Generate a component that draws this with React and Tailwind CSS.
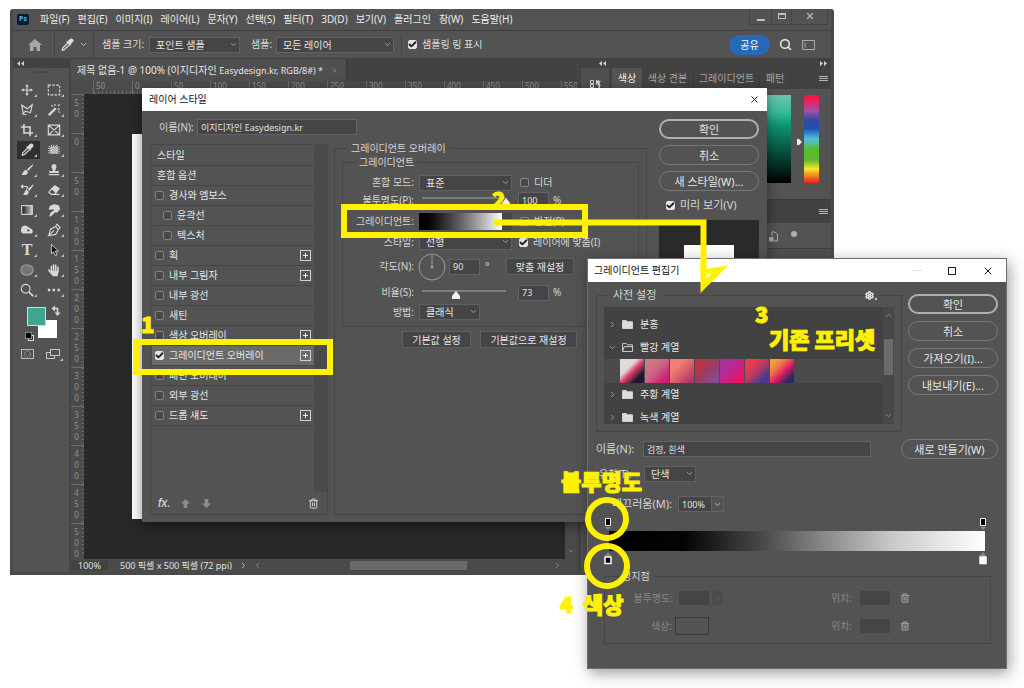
// App.jsx
import { useState } from "react";
import {
    Check,
    ChevronDown,
    ChevronLeft,
    ChevronRight,
    ChevronUp,
    Search,
    Settings,
    Trash2,
    X,
} from "lucide-react";

const MENUS = [
    "파일(F)",
    "편집(E)",
    "이미지(I)",
    "레이어(L)",
    "문자(Y)",
    "선택(S)",
    "필터(T)",
    "3D(D)",
    "보기(V)",
    "플러그인",
    "창(W)",
    "도움말(H)",
];

const EFFECTS = [
    { name: "경사와 엠보스" },
    { name: "윤곽선", sub: true },
    { name: "텍스처", sub: true },
    { name: "획", plus: true },
    { name: "내부 그림자", plus: true },
    { name: "내부 광선" },
    { name: "새틴" },
    { name: "색상 오버레이", plus: true },
    { name: "그레이디언트 오버레이", plus: true },
    { name: "패턴 오버레이" },
    { name: "외부 광선" },
    { name: "드롭 섀도", plus: true },
];

const SWATCHES = [
    "bg-[linear-gradient(135deg,#dcdcd8_15%,#dcdcd8_35%,#e0406c_52%,#1b1830_78%)]",
    "bg-[linear-gradient(135deg,#c98080_10%,#cf5f85_50%,#cc1c78_85%)]",
    "bg-[linear-gradient(135deg,#f07f72_30%,#d8606c_55%,#b03468_90%)]",
    "bg-[linear-gradient(135deg,#c03440_20%,#9a3c60_50%,#8a4a94_85%)]",
    "bg-[linear-gradient(135deg,#a8309c_20%,#c0248c_50%,#ec1468_85%)]",
    "bg-[linear-gradient(135deg,#e83c4c_25%,#b03c64_50%,#4c3890_80%)]",
    "bg-[linear-gradient(135deg,#f0a03c_15%,#ec7048_35%,#e41c64_55%,#30285c_82%)]",
];

// Small drawings of the toolbar, each on a 16x16 grid
const TOOLS = [
    {
        name: "이동",
        art: (
            <g>
                <path d="M8 2v12M2 8h12" />
                <path d="M6 4l2-2.5L10 4zM6 12l2 2.5 2-2.5zM4 6L1.500 8 4 10zM12 6l2.500 2L12 10z" fill="currentColor" stroke="none" />
            </g>
        ),
    },
    { name: "사각형 선택", art: <path d="M1.500 2.500h13v11h-13z" strokeDasharray="3 1.500" /> },
    { name: "다각형 올가미", art: <path d="M3.500 11L2 2.500l6.500 4L14 2l-2 9-6-1.500-3 3 4.500 1" /> },
    {
        name: "자동 선택",
        art: (
            <g>
                <path d="M2 14l8-8" strokeWidth="2.800" />
                <path d="M9 1v2.500M14.500 7H12M14.500 1.500L12.500 3.500M5 2.500L6.500 4M14.500 11L13 9.500" />
            </g>
        ),
    },
    { name: "자르기", art: <path d="M4.500 1v10.500H15M1 4.500h10.500V15" strokeWidth="1.800" /> },
    { name: "프레임", art: <path d="M1.500 2.500h13v11h-13zM1.500 2.500l13 11M14.500 2.500l-13 11" /> },
    {
        name: "스포이드",
        active: true,
        art: (
            <g>
                <path d="M8.500 6L3 11.500 2.500 14l2.300-.7L10.500 8" />
                <path d="M8 4.500l1.500-.5L12 1.500c1.500-1 3.500 1 2.500 2.500L12 6.500 11.500 8z" fill="currentColor" />
            </g>
        ),
    },
    {
        name: "복구 브러시",
        art: (
            <g>
                <rect x="3" y="4" width="10" height="8" rx="2" fill="#b4b4b4" stroke="none" />
                <path d="M2 4h12v8H2z" strokeDasharray="1 1.500" />
                <path d="M5 2v12M8 2v12M11 2v12" strokeDasharray="1 2" />
            </g>
        ),
    },
    {
        name: "브러시",
        art: (
            <path d="M14.500 1.500L8 7l1.500 2L15 2.500zM7 8c-3.500 0-2.500 3-5.500 5.500 3.500.8 8 .2 7.500-3.500z" fill="currentColor" stroke="none" />
        ),
    },
    {
        name: "도장",
        art: (
            <path d="M8 1a3.300 3.300 0 0 0-2 5.500L6.800 9H2.500v2.500h11V9H9.200L10 6.500A3.300 3.300 0 0 0 8 1zM2 12.500h12V14H2z" fill="currentColor" stroke="none" />
        ),
    },
    {
        name: "작업 내역 브러시",
        art: (
            <g>
                <path d="M15 1.500L9 7l1.500 2 5-6.500zM8 8c-3 0-2 3-4.500 5.500 3 .8 7 .2 6.500-3.500z" fill="currentColor" stroke="none" />
                <path d="M1 4h7c1 0 1 2-1 3M3.500 2l-2 2 2 2" />
            </g>
        ),
    },
    {
        name: "지우개",
        art: (
            <g>
                <path d="M9 3l5 3.500-3.500 4-5-4z" fill="currentColor" />
                <path d="M5.500 6.500l5 4L8.500 13H5l-3-2.500zM8 13h6" />
            </g>
        ),
    },
    {
        name: "그레이디언트",
        art: (
            <g>
                <defs>
                    <linearGradient id="toolGradient">
                        <stop offset="0" stopColor="#111" />
                        <stop offset="1" stopColor="#ccc" />
                    </linearGradient>
                </defs>
                <rect x="2" y="3" width="12" height="10" fill="url(#toolGradient)" />
            </g>
        ),
    },
    {
        name: "손가락",
        art: (
            <path d="M2 7l1.500-4L8 1.500l5.500 1L15 7l-3.500 4-2-.5L4.500 15l-2 .3L4 11l4.500-3-2-1L4 8z" fill="currentColor" stroke="none" />
        ),
    },
    {
        name: "닷지",
        art: (
            <g>
                <path d="M1.500 6c1-3 5-4 7-2l5 3c2 1 1 5-1 5h-8C1.500 12 .5 9 1.500 6z" fill="currentColor" stroke="none" />
                <circle cx="9.500" cy="8.500" r="1.300" fill="#535353" stroke="none" />
            </g>
        ),
    },
    {
        name: "펜",
        art: <path d="M2 14.500l2-7.500 6-3 3 3.500-3 5.500-8 1.500L8 8.500M10 3l1.500-1.500L15 5l-1.500 2" />,
    },
    { name: "문자", text: "T" },
    {
        name: "패스 선택",
        art: (
            <path d="M5 1.500v11l2.500-2.500 2 4.500 2-1-2-4.300h3.500z" fill="#111" strokeWidth="1" />
        ),
    },
    { name: "타원", art: <ellipse cx="8" cy="8" rx="7" ry="6" fill="#757575" stroke="#a0a0a0" /> },
    {
        name: "손",
        art: (
            <g>
                <path d="M5 10V4M7.500 9V2M10 9V2.500M12.500 10V5M2 8l3.500 4.500" strokeWidth="1.800" strokeLinecap="round" />
                <path d="M4.200 9h9.200L12 15H6.500z" fill="currentColor" stroke="none" />
            </g>
        ),
    },
    {
        name: "돋보기",
        art: (
            <g>
                <circle cx="6.500" cy="6.500" r="5" />
                <path d="M10 10l5 5" strokeWidth="2" />
            </g>
        ),
    },
    {
        name: "도구 모음 편집",
        art: <path d="M1 8h2.700M6.500 8h2.700M12 8h2.700" strokeWidth="2.700" />,
    },
];

const CheckBox = ({ children, checked = false, dim = false }) => {
    const [on, setOn] = useState(checked);
    return (
        <label className="flex items-center gap-[5px] whitespace-nowrap">
            <span className="relative flex size-[9px] shrink-0">
                <input
                    type="checkbox"
                    checked={on}
                    onChange={() => setOn(!on)}
                    className={`size-full appearance-none rounded-[2px] border ${
                        dim ? "border-[#808080]" : "border-[#8a8a8a]"
                    } bg-[#484848] checked:border-[#e4e4e4] checked:bg-[#e4e4e4]`}
                />
                {on && (
                    <Check
                        className="pointer-events-none absolute inset-0 size-full text-[#222]"
                        strokeWidth={5}
                    />
                )}
            </span>
            {children}
        </label>
    );
};

const Select = ({ value, label, className }) => (
    <span className={`relative flex h-4 ${className}`}>
        <select
            aria-label={label}
            className="w-full appearance-none border border-[#616161] bg-[#454545] pl-[6px] leading-[14px] text-[#e6e6e6]"
        >
            <option>{value}</option>
        </select>
        <ChevronDown className="pointer-events-none absolute top-[3px] right-[2px] size-[9px] text-[#b8b8b8]" />
    </span>
);

const Field = ({ id, value, className }) => (
    <input
        id={id}
        defaultValue={value}
        className={`h-4 min-w-0 border border-[#626262] bg-[#454547] px-[3px] text-[9px] text-[#e0e0e0] ${className}`}
    />
);

const PillButton = ({ children, primary }) => (
    <button
        className={`h-5 w-full rounded-full text-[11px] leading-none whitespace-nowrap text-[#e6e6e6] ${
            primary ? "border-2 border-[#b0b0b0]" : "border border-[#787878]"
        }`}
    >
        {children}
    </button>
);

const SmallButton = ({ children, className }) => (
    <button
        className={`h-[17px] border border-[#5f5f5f] bg-[#454545] leading-none whitespace-nowrap text-[#e6e6e6] ${className}`}
    >
        {children}
    </button>
);

const Slider = ({ id, at }) => (
    <span className="relative flex h-3 w-[84px] items-start pt-[3px]">
        <input
            id={id}
            type="range"
            defaultValue={at}
            className="h-[2px] w-full appearance-none bg-[#7c7c7c] [&::-webkit-slider-thumb]:opacity-0"
        />
        <svg
            viewBox="0 0 8 8"
            className="pointer-events-none absolute top-[4px] -ml-1 size-2"
            style={{ left: `${at}%` }}
        >
            <path d="M4 0l4 5v3H0V5z" fill="#f2f2f2" />
        </svg>
    </span>
);

const Tool = ({ tool }) => (
    <button
        aria-label={tool.name}
        className={`flex h-[18px] w-[23px] items-center justify-center text-[#d8d8d8] ${
            tool.active ? "bg-[#2f2f2f]" : ""
        }`}
    >
        {tool.text ? (
            <span className="w-[14px] text-center font-['Liberation_Serif',serif] text-[16px] leading-none font-bold">
                {tool.text}
            </span>
        ) : (
            <svg viewBox="0 0 16 16" className="size-[14px]" fill="none" stroke="currentColor" strokeWidth="1.300">
                {tool.art}
            </svg>
        )}
        <svg viewBox="0 0 3 3" className="mt-[11px] size-[3px]">
            <path d="M3 0v3H0z" fill="#bdbdbd" />
        </svg>
    </button>
);

const MenuLines = () => (
    <svg viewBox="0 0 9 7" className="h-[7px] w-[9px]" stroke="#b4b4b4">
        <path d="M0 1.500h9M0 3.500h9M0 5.500h9" />
    </svg>
);

const CollapseArrows = ({ right }) => (
    <svg viewBox="0 0 7 5" className="h-[5px] w-[7px]" fill="#d0d0d0">
        {right ? <path d="M0 0l3 2.500L0 5zM4 0l3 2.500L4 5z" /> : <path d="M3 0L0 2.500 3 5zM7 0L4 2.500 7 5z" />}
    </svg>
);

const Toolbar = () => (
    <aside className="flex w-[56px] shrink-0 flex-col">
        <div className="flex h-[9px] items-center bg-[#424242] pl-1">
            <CollapseArrows />
        </div>
        <div className="mx-auto mt-[3px] h-[2px] w-4 bg-[#494949]" />
        <div className="mt-2 grid grid-cols-2 gap-x-[3px] gap-y-[2px] pr-[2px] pl-1">
            {TOOLS.map((tool) => (
                <Tool key={tool.name} tool={tool} />
            ))}
        </div>
        <svg viewBox="0 0 56 64" className="mt-[3px] h-16 w-[56px] shrink-0" fill="none">
            <rect x="25" y="18" width="19" height="18" fill="#fff" />
            <rect x="14.500" y="5.500" width="18" height="18" fill="#3fa590" stroke="#d8d8d8" />
            <path d="M41 6.500h3.500v5" stroke="#d8d8d8" strokeWidth="1.600" />
            <path d="M42 3.500v6l-3.500-3zM41.500 10.500h6l-3 3.500z" fill="#d8d8d8" />
            <rect x="15.500" y="33.500" width="5" height="5" fill="#333" stroke="#ddd" />
            <rect x="12.500" y="30.500" width="6" height="6" fill="#000" stroke="#888" />
            <rect x="8.500" y="47.500" width="12" height="9" stroke="#bbb" />
            <circle cx="14.500" cy="52" r="3" stroke="#bbb" strokeDasharray="1 1" />
            <rect x="33.500" y="50.500" width="8" height="6" stroke="#c8c8c8" />
            <rect x="37.500" y="47.500" width="9" height="6" fill="#535353" stroke="#c8c8c8" />
            <path d="M50 56v3h-3z" fill="#bdbdbd" />
        </svg>
    </aside>
);

const DocumentArea = () => (
    <main className="flex min-w-0 flex-1 flex-col border-x-2 border-[#454545]">
        <div className="flex h-[22px] shrink-0 bg-[#424242]">
            <div className="flex items-center gap-[8px] border-r border-[#383838] bg-[#4f4f4f] pr-2 pl-[6px] text-[#e4e4e4]">
                <span className="whitespace-nowrap">
                    제목 없음-1 @ 100% (이지디자인 <span className="text-[9px]">Easydesign.kr, RGB/8#) *</span>
                </span>
                <X className="size-[7px] text-[#a0a0a0]" />
            </div>
        </div>
        <div className="flex h-[13px] shrink-0 overflow-hidden bg-[#4b4b4b] pl-[22px] text-[8px] leading-[10px] text-[#909090]">
            {[50, 0, 50, 100, 150, 200, 250, 300, 350, 400, 450, 500, 550].map((n, i) => (
                <span
                    key={i}
                    className="w-[39px] shrink-0 border-l border-[#6c6c6c] bg-[repeating-linear-gradient(90deg,#6c6c6c_0_1px,transparent_1px_4px)] bg-[length:100%_3px] bg-bottom bg-no-repeat pl-[2px]"
                >
                    {n}
                </span>
            ))}
        </div>
        <div className="flex min-h-0 flex-1">
            <div className="w-[13px] shrink-0 overflow-hidden bg-[#4b4b4b] text-[8px] leading-[9px] text-[#909090]">
                {[50, 0, 50, 100, 150, 200, 250, 300, 350, 400, 450, 500].map((n, i) => (
                    <div
                        key={i}
                        className="h-[39px] border-t border-[#6c6c6c] bg-[repeating-linear-gradient(180deg,#6c6c6c_0_1px,transparent_1px_4px)] bg-[length:2px_100%] bg-right bg-no-repeat pt-[2px] pl-px last:h-[30px]"
                    >
                        <span className="block w-[9px] [text-orientation:upright] [writing-mode:vertical-rl]">{n}</span>
                    </div>
                ))}
            </div>
            <div className="min-w-0 flex-1 overflow-hidden bg-[#282828] pt-[40px] pl-[48px]">
                <div className="size-[385px] bg-white" />
            </div>
            <div className="flex w-3 shrink-0 flex-col items-center justify-end bg-[#4a4a4a] pb-1">
                <ChevronDown className="size-2 text-[#999]" />
            </div>
        </div>
        <div className="flex h-[13px] shrink-0 items-center bg-[#4a4a4a] text-[9px] leading-none whitespace-nowrap text-[#e0e0e0]">
            <span className="w-[37px] bg-[#424242] pl-[7px]">100%</span>
            <span className="ml-[12px] w-[119px]">500 픽셀 x 500 픽셀 (72 ppi)</span>
            <ChevronRight className="size-[9px]" />
            <ChevronLeft className="ml-[5px] size-[9px] text-[#999]" />
            <div className="flex h-full flex-1 items-center pr-[3px]">
                <div className="mr-[86px] ml-auto h-[9px] w-[117px] bg-[#696969]" />
                <ChevronRight className="size-[9px] text-[#999]" />
            </div>
            <span className="w-3" />
        </div>
    </main>
);

const PanelDock = () => (
    <aside className="flex w-[252px] shrink-0 gap-[3px] bg-[#424242] pl-[2px]">
        <div className="flex w-[28px] flex-col">
            <div className="flex h-[9px] items-center justify-end pr-[3px]">
                <CollapseArrows />
            </div>
            <div className="flex flex-1 justify-center bg-[#4f4f4f] pt-[11px]">
                <svg viewBox="0 0 13 12" className="h-3 w-[13px]" fill="none" stroke="#d0d0d0">
                    <path d="M1.500 1.500h3v3h-3zM1.500 5.500h3v3h-3zM1.500 8.500h3v3h-3z" />
                    <path d="M7 1l5 1-1.500 1.500c1.500 2 1 5-1 7.500 0-3 0-5-1-6L7 6z" fill="#d0d0d0" stroke="none" />
                </svg>
            </div>
        </div>
        <div className="flex min-w-0 flex-1 flex-col">
            <div className="flex h-[9px] items-center justify-end pr-1">
                <CollapseArrows right />
            </div>
            <div className="flex h-[21px] items-center text-[#a6a6a6]">
                <button className="h-full w-[30px] bg-[#535353] text-[#f0f0f0]">색상</button>
                <button className="h-full w-[51px]">색상 견본</button>
                <button className="h-full w-[66px] border-l border-[#3c3c3c]">그레이디언트</button>
                <button className="h-full w-[32px] border-x border-[#3c3c3c]">패턴</button>
                <span className="mr-[3px] ml-auto">
                    <MenuLines />
                </span>
            </div>
            <div className="flex h-[110px] justify-end bg-[#535353] pt-[6px] pr-3">
                <div className="h-[88px] w-[160px] bg-[linear-gradient(to_bottom,transparent_20%,#000),linear-gradient(to_bottom,#6cc4ac,#12b48c_35%)]" />
                <svg viewBox="0 0 5 6" className="mt-[44px] mr-[2px] ml-[6px] h-[6px] w-[5px]">
                    <path d="M0 0h2l3 3-3 3H0z" fill="#eee" />
                </svg>
                <div className="h-[88px] w-[15px] bg-[linear-gradient(to_bottom,#ee1c2a,#e8206c_8%,#a050a4_18%,#3848a4_28%,#1f50b0_38%,#4cc4e0_50%,#5cb82c_62%,#64b82c_74%,#f4ea28_84%,#f08024_92%,#ec2024)]" />
            </div>
            <div className="flex h-[24px] items-center justify-end border-t border-[#3a3a3a] pr-[3px]">
                <MenuLines />
            </div>
            <div className="flex h-[26px] justify-end gap-[13px] border-b border-[#404040] bg-[#535353] pt-[8px] pr-[34px]">
                <svg viewBox="0 0 9 11" className="h-[11px] w-[9px]" fill="none" stroke="#aaa">
                    <path d="M3 5V1h3l2.500 2.500V10H5" />
                    <path d="M0 6h4.500v4.500H0z" fill="#aaa" stroke="none" />
                </svg>
                <span className="size-[6px] rounded-full bg-[#b0b0b0]" />
            </div>
            <div className="flex-1 bg-[#505050]" />
        </div>
    </aside>
);

const PhotoshopWindow = () => (
    <div className="flex flex-1 flex-col overflow-hidden rounded-t-[3px] border-x-[3px] border-b-[3px] border-[#4a4a4a] bg-[#535353]">
        <header className="flex h-[22px] shrink-0 items-center border-b border-[#404040] pl-1 text-[#ececec]">
            <span className="flex h-[11px] w-3 items-center justify-center rounded-[2px] bg-[#001e36] text-[7px] font-bold text-[#5db4ff]">
                Ps
            </span>
            <nav className="ml-[11px] flex gap-2 whitespace-nowrap">
                {MENUS.map((menu) => (
                    <button key={menu}>{menu}</button>
                ))}
            </nav>
            <div className="mr-[3px] mb-[6px] ml-auto flex h-[16px] items-stretch border border-t-0 border-[#434343] text-[#b8b8b8]">
                <button aria-label="최소화" className="flex w-[21px] items-end justify-center pb-[3px]">
                    <span className="h-[2px] w-2 bg-[#c0c0c0]" />
                </button>
                <button
                    aria-label="최대화"
                    className="flex w-[21px] items-center justify-center border-x border-[#434343]"
                >
                    <span className="h-[6px] w-2 border border-t-2 border-[#c0c0c0]" />
                </button>
                <button aria-label="닫기" className="flex w-[35px] items-center justify-center">
                    <X className="size-[10px]" strokeWidth={3} />
                </button>
            </div>
        </header>
        <div className="flex h-[28px] shrink-0 items-center border-b border-[#404040] whitespace-nowrap text-[#dcdcdc]">
            <svg viewBox="0 0 14 12" className="ml-[15px] h-3 w-[14px]">
                <path d="M7 0l7 6h-2v6H8.500V8h-3v4H2V6H0z" fill="#a8a8a8" />
            </svg>
            <span className="ml-[12px] h-full border-l border-[#454545]" />
            <svg viewBox="0 0 16 16" className="ml-[5px] size-[14px]" fill="none" stroke="#e0e0e0" strokeWidth="1.300">
                {TOOLS[6].art}
            </svg>
            <ChevronDown className="ml-[5px] size-[9px]" />
            <span className="mr-[8px] ml-[5px] h-full border-l border-[#454545]" />
            <span className="w-[42px]">샘플 크기:</span>
            <Select label="샘플 크기" value="포인트 샘플" className="ml-[5px] w-[91px]" />
            <span className="mr-[4px] ml-[11px] w-[21px]">샘플:</span>
            <Select label="샘플" value="모든 레이어" className="w-[118px]" />
            <span className="mr-[6px] ml-[7px] h-5 border-l border-[#454545]" />
            <CheckBox checked>샘플링 링 표시</CheckBox>
            <button className="ml-auto h-5 w-[41px] rounded-full bg-[#2669b8] leading-none text-white">공유</button>
            <Search className="ml-[9px] size-[13px] text-[#e0e0e0]" strokeWidth={3} />
            <svg viewBox="0 0 13 10" className="mr-[16px] ml-[10px] h-[10px] w-[13px]" fill="none" stroke="#aaa">
                <path d="M.5.500h12v9H.500zM3 2.500v5" />
            </svg>
        </div>
        <div className="flex min-h-0 flex-1">
            <Toolbar />
            <DocumentArea />
            <PanelDock />
        </div>
    </div>
);

const Row = ({ label, htmlFor, className, children }) => (
    <div className={`flex items-center ${className}`}>
        <label htmlFor={htmlFor} className="mr-[5px] w-[71px] text-right whitespace-nowrap">
            {label}
        </label>
        {children}
    </div>
);

const LayerStyleDialog = () => (
    <section className="absolute top-[88px] left-[142px] flex min-h-[434px] w-[625px] flex-col bg-[#535353] text-[#d6d6d6] shadow-[0_4px_12px_rgba(0,0,0,0.45)]">
        <header className="flex h-[23px] items-center justify-between bg-white px-[7px] text-[#111]">
            레이어 스타일
            <button aria-label="닫기">
                <X className="size-[11px]" strokeWidth={2} />
            </button>
        </header>
        <div className="flex flex-1 gap-3 p-2 pb-[7px]">
            <div className="flex flex-1 flex-col">
                <div className="flex h-4 items-center">
                    <label htmlFor="layerName" className="mr-1 ml-[9px] w-[34px] whitespace-nowrap">
                        이름(N):
                    </label>
                    <Field id="layerName" value="이지디자인 Easydesign.kr" className="w-[160px]" />
                </div>
                <div className="mt-[6px] flex flex-1 gap-[6px]">
                    <div className="mt-[3px] flex w-[178px] flex-col border border-[#484848] text-[#e6e6e6]">
                        <div className="flex flex-1">
                            <ul className="flex-1 pt-px pl-px">
                                <li className="flex h-5 items-center border-b border-[#454545] pl-[5px]">스타일</li>
                                <li className="flex h-5 items-center border-b border-[#454545] pl-[5px]">혼합 옵션</li>
                                {EFFECTS.map((effect) => {
                                    const on = effect.name === "그레이디언트 오버레이";
                                    return (
                                        <li
                                            key={effect.name}
                                            className={`flex h-5 items-center justify-between border-b border-[#454545] pr-[3px] ${
                                                effect.sub ? "pl-[11px]" : "pl-[3px]"
                                            } ${on ? "bg-[#6a6a6a]" : ""}`}
                                        >
                                            <CheckBox checked={on} dim>
                                                {effect.name}
                                            </CheckBox>
                                            {effect.plus && (
                                                <button
                                                    aria-label={`${effect.name} 추가`}
                                                    className="size-[11px] border border-[#d0d0d0]"
                                                >
                                                    <svg viewBox="0 0 9 9" className="size-[9px]">
                                                        <path d="M2 4.500h5M4.500 2v5" stroke="#eee" strokeWidth="1" />
                                                    </svg>
                                                </button>
                                            )}
                                        </li>
                                    );
                                })}
                            </ul>
                            <div className="w-[13px] bg-[#4a4a4d]" />
                        </div>
                        <div className="flex h-[22px] items-center gap-[10px] pr-2 pl-[7px]">
                            <span className="font-['Liberation_Sans',sans-serif] text-[12px] italic">fx.</span>
                            <svg viewBox="0 0 10 10" className="size-[9px]" fill="#8c8c8c">
                                <path d="M5 0l5 5H7v5H3V5H0z" />
                            </svg>
                            <svg viewBox="0 0 10 10" className="ml-[2px] size-[9px]" fill="#8c8c8c">
                                <path d="M5 10l5-5H7V0H3v5H0z" />
                            </svg>
                            <Trash2 className="ml-auto size-[11px] text-[#ddd]" />
                        </div>
                    </div>
                    <fieldset className="min-w-0 flex-1 border border-[#464646] px-[7px]">
                        <legend className="ml-[5px] px-1 leading-[14px]">그레이디언트 오버레이</legend>
                        <fieldset className="border border-[#464646] pt-[5px] pb-[5px]">
                            <legend className="ml-[12px] px-1 leading-[14px]">그레이디언트</legend>
                            <Row label="혼합 모드:" className="h-[17px]">
                                <Select label="혼합 모드" value="표준" className="mr-[8px] w-[93px]" />
                                <CheckBox>디더</CheckBox>
                            </Row>
                            <Row label="불투명도(P):" htmlFor="opacity" className="h-[18px]">
                                <span className="mr-[12px] ml-[3px]">
                                    <Slider id="opacity" at={100} />
                                </span>
                                <Field value="100" className="mr-1 w-[31px]" />%
                            </Row>
                            <Row label="그레이디언트:" className="h-6">
                                <button
                                    aria-label="그레이디언트 편집"
                                    className="h-[17px] w-[83px] bg-linear-to-r from-black to-white"
                                />
                                <span className="mr-[8px] h-[17px] w-[10px] bg-[#454545]" />
                                <CheckBox>반전(R)</CheckBox>
                            </Row>
                            <Row label="스타일:" className="h-[18px]">
                                <Select label="스타일" value="선형" className="mr-[7px] w-[93px]" />
                                <CheckBox checked>레이어에 맞춤(I)</CheckBox>
                            </Row>
                            <Row label="각도(N):" htmlFor="angle" className="h-[31px]">
                                <svg viewBox="0 0 28 28" className="-ml-px size-7" fill="none" stroke="#9a9a9a">
                                    <circle cx="14" cy="14" r="13" />
                                    <path d="M14 2v12" />
                                    <circle cx="14" cy="14" r="1" fill="#ddd" />
                                </svg>
                                <Field id="angle" value="90" className="mr-[5px] ml-[3px] w-[31px]" />
                                <span className="w-[21px]">°</span>
                                <SmallButton className="w-[68px]">맞춤 재설정</SmallButton>
                            </Row>
                            <Row label="비율(S):" htmlFor="scale" className="h-[21px]">
                                <span className="mr-[12px] ml-[3px]">
                                    <Slider id="scale" at={40} />
                                </span>
                                <Field value="73" className="mr-1 w-[31px]" />%
                            </Row>
                            <Row label="방법:" className="h-[18px]">
                                <Select label="방법" value="클래식" className="w-[61px]" />
                            </Row>
                        </fieldset>
                        <div className="mt-1 ml-[60px] flex gap-[9px]">
                            <SmallButton className="w-[69px]">기본값 설정</SmallButton>
                            <SmallButton className="w-[97px]">기본값으로 재설정</SmallButton>
                        </div>
                    </fieldset>
                </div>
            </div>
            <div className="flex w-[100px] flex-col gap-[6px] text-[11px]">
                <PillButton primary>확인</PillButton>
                <PillButton>취소</PillButton>
                <PillButton>새 스타일(W)...</PillButton>
                <div className="flex h-[17px] items-center pl-[7px]">
                    <CheckBox checked>미리 보기(V)</CheckBox>
                </div>
                <div className="flex h-[100px] items-center justify-center bg-[#2a2a2a]">
                    <div className="size-[50px] bg-white" />
                </div>
            </div>
        </div>
    </section>
);

const FolderRow = ({ name, open }) => (
    <div className="flex h-[23px] items-center gap-[5px] pl-1">
        {open ? (
            <ChevronDown className="size-[9px] text-[#bbb]" />
        ) : (
            <ChevronRight className="size-[9px] text-[#bbb]" />
        )}
        <svg viewBox="0 0 12 10" className="h-[9px] w-[11px]" fill={open ? "none" : "#dcdcdc"} stroke="#dcdcdc">
            <path d="M.5.500h4L6 2h5.500v7.500H.500z" />
            {open && <path d="M.5 9l2-5h9" />}
        </svg>
        <span className="ml-[2px]">{name}</span>
    </div>
);

const OpacityStop = () => (
    <svg viewBox="0 0 8 14" className="h-[14px] w-2">
        <path d="M1 10h6l-3 3z" fill="#8a8a8a" />
        <path d="M1.500 1.500h5v7h-5z" fill="#000" stroke="#eee" />
    </svg>
);

const ColorStop = ({ fill }) => (
    <svg viewBox="0 0 8 14" className="h-[14px] w-2">
        <path d="M1 5h6L4 1z" fill="#8a8a8a" />
        <path d="M1 6h6v6.500H1z" fill={fill} stroke="#fff" strokeWidth="1.500" />
    </svg>
);

const StopPosition = ({ id }) => (
    <div className="mr-[80px] ml-auto flex items-center">
        <label htmlFor={id} className="mr-2">
            위치:
        </label>
        <input id={id} disabled className="h-[14px] w-[30px] bg-[#454547]" />
        <button disabled aria-label="삭제" className="ml-[10px]">
            <Trash2 className="size-[10px] text-[#989898]" strokeWidth={3} />
        </button>
    </div>
);

const GradientEditorDialog = () => (
    <section className="absolute top-[258px] left-[587px] w-[420px] border border-[#6e6e6e] bg-[#535353] pb-6 text-[#d6d6d6] shadow-[2px_4px_14px_rgba(0,0,0,0.4)]">
        <header className="flex h-[23px] items-center bg-white pr-[12px] pl-[6px] text-[#111]">
            <span className="flex-1">그레이디언트 편집기</span>
            <button aria-label="최소화" className="h-px w-[9px] bg-[#ddd]" />
            <button aria-label="최대화" className="ml-[26px] size-2 border border-[#222]" />
            <button aria-label="닫기" className="ml-[26px]">
                <X className="size-[12px]" strokeWidth={2} />
            </button>
        </header>
        <div className="px-2 pt-[5px]">
            <div className="flex gap-[6px]">
                <fieldset className="min-w-0 flex-1 border border-[#464646] px-[7px] pb-[7px]">
                    <legend className="ml-[3px] px-[6px] text-[11px] leading-4">사전 설정</legend>
                    <button aria-label="사전 설정 메뉴" className="-mt-[12px] mr-[17px] mb-[7px] ml-auto flex items-end">
                        <Settings className="size-[9px] text-[#e4e4e4]" strokeWidth={4} />
                        <span className="ml-px size-[2px] bg-[#ccc]" />
                    </button>
                    <div className="flex h-[117px] overflow-hidden bg-[#424242] text-[#e6e6e6]">
                        <div className="flex-1 pt-[6px]">
                            <FolderRow name="분홍" />
                            <FolderRow name="빨강 계열" open />
                            <div className="flex gap-px bg-[#4b4b4b] pl-4">
                                {SWATCHES.map((swatch) => (
                                    <button key={swatch} aria-label="그레이디언트 견본" className={`size-6 ${swatch}`} />
                                ))}
                            </div>
                            <FolderRow name="주황 계열" />
                            <FolderRow name="녹색 계열" />
                        </div>
                        <div className="flex w-[11px] flex-col items-center bg-[#48484a] py-1">
                            <ChevronUp className="size-[9px] text-[#999]" />
                            <div className="mt-[19px] h-[36px] w-[9px] bg-[#6b6b6b]" />
                            <ChevronDown className="mt-auto size-[9px] text-[#999]" />
                        </div>
                    </div>
                </fieldset>
                <div className="mt-[7px] flex w-[90px] flex-col gap-[7px]">
                    <PillButton primary>확인</PillButton>
                    <PillButton>취소</PillButton>
                    <PillButton>가져오기(I)...</PillButton>
                    <PillButton>내보내기(E)...</PillButton>
                </div>
            </div>
            <div className="mt-[7px] flex h-5 items-center">
                <label htmlFor="gradientName" className="w-[47px] text-[11px] whitespace-nowrap">
                    이름(N):
                </label>
                <Field id="gradientName" value="검정, 흰색" className="mr-[30px] flex-1" />
                <span className="w-[97px]">
                    <PillButton>새로 만들기(W)</PillButton>
                </span>
            </div>
            <div className="mt-[7px] flex h-4 items-center">
                <span className="w-[48px] pl-[3px]">유형(T):</span>
                <Select label="유형" value="단색" className="w-[52px]" />
            </div>
            <div className="mt-[14px] flex h-4 items-center">
                <label htmlFor="smoothness" className="w-[82px] pr-[6px] text-right text-[11px] leading-4 whitespace-nowrap">
                    매끄러움(M):
                </label>
                <Field id="smoothness" value="100%" className="w-[34px]" />
                <span className="flex h-4 w-3 items-center justify-center border border-l-0 border-[#626262]">
                    <ChevronDown className="size-[9px]" />
                </span>
            </div>
            <div className="mt-[5px] mr-[11px] ml-2">
                <div className="flex justify-between">
                    <OpacityStop />
                    <OpacityStop />
                </div>
                <div className="mr-[2px] ml-[5px] h-[20px] bg-[linear-gradient(to_right,#000_0%,#060303_20%,#4a4a4d_41%,#848484_56%,#c8c8c8_75%,#fff_100%)]" />
                <div className="flex justify-between">
                    <ColorStop fill="#000" />
                    <ColorStop fill="#fff" />
                </div>
            </div>
            <fieldset className="mt-[3px] mr-[7px] ml-2 border border-[#464646] pb-[3px] text-[#858585]">
                <legend className="ml-[13px] px-1 leading-4 text-[#d6d6d6]">정지점</legend>
                <div className="flex h-7 items-center">
                    <label htmlFor="stopOpacity" className="w-[74px] pr-[6px] text-right">
                        불투명도:
                    </label>
                    <input id="stopOpacity" disabled className="h-[14px] w-[30px] bg-[#454547]" />
                    <span className="ml-[3px] flex h-[14px] w-[11px] items-center justify-center bg-[#4b4b4b]">
                        <ChevronDown className="size-2 text-[#666]" />
                    </span>
                    <StopPosition id="opacityPosition" />
                </div>
                <div className="flex h-7 items-center">
                    <span className="w-[70px] pr-[3px] text-right">색상:</span>
                    <button disabled aria-label="정지점 색상" className="h-[18px] w-[34px] border border-[#383838]" />
                    <StopPosition id="colorPosition" />
                </div>
            </fieldset>
        </div>
    </section>
);

const Note = ({ children, className }) => (
    <strong
        className={`absolute text-[22px] leading-[22px] font-black whitespace-nowrap text-[#fff200] [-webkit-text-stroke:1px_#fff200] ${className}`}
    >
        {children}
    </strong>
);

// Yellow marker layer drawn over both dialogs
const Annotations = () => (
    <div className="pointer-events-none absolute inset-0 font-['Noto_Sans_CJK_KR',sans-serif]">
        <svg width="1024" height="688" fill="none" stroke="#fff200" strokeWidth="6">
            <rect x="136" y="342" width="194" height="30" />
            <rect x="344" y="207" width="241" height="28" />
            <path d="M494 222.500H703.500V272" />
            <path d="M700.500 266V293L728 265.500L706.500 269V266zM706.500 273.500h5l-5 5z" fill="#fff200" fillRule="evenodd" stroke="none" />
            <circle cx="607" cy="519" r="19" />
            <circle cx="607" cy="566" r="20" />
        </svg>
        <Note className="top-[312px] left-[141px]">1</Note>
        <Note className="top-[187px] left-[492px]">2</Note>
        <Note className="top-[302px] left-[755px]">3</Note>
        <Note className="top-[327px] left-[769px]">기존 프리셋</Note>
        <Note className="top-[469px] left-[561px]">불투명도</Note>
        <Note className="top-[592px] left-[560px]">4</Note>
        <Note className="top-[592px] left-[583px]">색상</Note>
    </div>
);

const App = () => {
    return (
        <div className="relative flex min-h-screen flex-col bg-white pt-[9px] pr-[190px] pb-[113px] pl-[10px] font-['Noto_Sans','Noto_Sans_CJK_KR',sans-serif] text-[10px]">
            <PhotoshopWindow />
            <LayerStyleDialog />
            <GradientEditorDialog />
            <Annotations />
        </div>
    );
};

export default App;
